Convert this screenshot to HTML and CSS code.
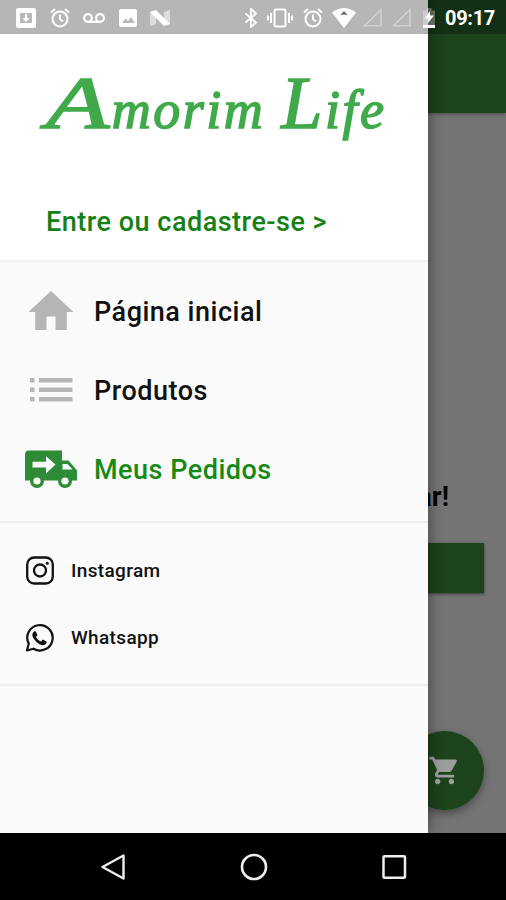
FILE: index.html
```html
<!DOCTYPE html>
<html lang="pt-BR">
<head>
    <meta charset="UTF-8">
    <meta name="viewport" content="width=device-width, initial-scale=1.0">
    <title>Amorim Life</title>
    <link rel="stylesheet" href="styles.css">
</head>
<body>
    <div class="screen">
        <!-- Page behind the drawer -->
        <div class="page">
            <header class="app-bar"></header>
            <main class="page-content">
                <p class="page-message">ar!</p>
                <div class="page-button"></div>
                <div class="cart-button">
                    <svg width="33" height="33" viewBox="0 0 24 24" fill="#9b9f9b">
                        <path d="M7 18c-1.1 0-1.99.9-1.99 2S5.900 22 7 22s2-.9 2-2-.9-2-2-2zM1 2v2h2l3.600 7.590-1.350 2.450c-.16.280-.25.610-.25.960 0 1.100.9 2 2 2h12v-2H7.420c-.14 0-.25-.11-.25-.25l.03-.12.900-1.630h7.450c.75 0 1.410-.41 1.750-1.030l3.580-6.490A1 1 0 0 0 20 4H5.210l-.94-2H1zm16 16c-1.100 0-1.990.9-1.990 2s.89 2 1.990 2 2-.9 2-2-.9-2-2-2z"/>
                    </svg>
                </div>
            </main>
        </div>

        <!-- Drawer -->
        <nav class="drawer">
            <div class="drawer-header">
                <h1 class="logo"><span class="logo-initial wide">A</span>morim <span class="logo-initial">L</span>ife</h1>
                <a class="login">Entre ou cadastre-se &gt;</a>
            </div>
            <ul class="menu">
                <li class="menu-item">
                    <svg width="54" height="54" viewBox="0 0 24 24" fill="#b5b5b5"><path d="M10 20v-6h4v6h5v-8h3L12 2.700 2 12h3v8z"/></svg>
                    <span>Página inicial</span>
                </li>
                <li class="menu-item">
                    <svg width="54" height="54" viewBox="0 0 54 54" fill="#b5b5b5">
                        <path d="M6 14h4.500v4.500H6zM6 23.500h4.500V28H6zM6 33h4.500v4.500H6zM15 14h33.500v4.500H15zM15 23.500h33.500V28H15zM15 33h33.500v4.500H15z"/>
                    </svg>
                    <span>Produtos</span>
                </li>
                <li class="menu-item active">
                    <svg width="54" height="54" viewBox="0 0 54 54">
                        <path fill="#2f8c36" d="M5 7.500h33v10h6.500L53 27.500v10H1v-26q0-4 4-4z"/>
                        <path fill="#fafafa" d="M8.500 18.800H22v-5.500l9.500 8.200-9.500 9v-6H8.500zM38.500 21h5l5 5.500h-10z"/>
                        <circle cx="13" cy="38" r="5.300" fill="#fafafa" stroke="#2f8c36" stroke-width="3.400"/>
                        <circle cx="41" cy="38" r="5.300" fill="#fafafa" stroke="#2f8c36" stroke-width="3.400"/>
                    </svg>
                    <span>Meus Pedidos</span>
                </li>
            </ul>
            <ul class="social">
                <li class="social-item">
                    <svg width="30" height="30" viewBox="0 0 30 30" fill="none" stroke="#111" stroke-width="2.300">
                        <rect x="2.200" y="1.500" width="25.600" height="26" rx="7"/>
                        <circle cx="15" cy="14.500" r="6"/>
                        <circle cx="22.300" cy="7.300" r="1.500" fill="#111" stroke="none"/>
                    </svg>
                    <span>Instagram</span>
                </li>
                <li class="social-item">
                    <svg width="30" height="30" viewBox="0 0 30 30">
                        <path fill="none" stroke="#111" stroke-width="2.200" stroke-linejoin="round" d="M1.900 27.500l1.900-6.700A12.700 12.700 0 1 1 8.500 25.700z"/>
                        <path fill="#111" d="M10.200 8.200c-.6-.1-1.200.1-1.600.6-3.200 3.600.5 8 3.300 10.600 2.900 2.500 7.300 4.200 9.300 1.200.5-.8.600-1.800.3-2.100l-3.300-1.700c-.5-.2-.8 0-1.100.4l-1.100 1.400c-1.800-.5-4.300-2.800-5-4.500l1.200-1.700c.2-.3.100-.6 0-.9l-1.400-3z"/>
                    </svg>
                    <span>Whatsapp</span>
                </li>
            </ul>
        </nav>

        <!-- Status bar -->
        <div class="status-bar">
            <div class="status-left">
                <svg width="20" height="20" viewBox="0 0 20 20"><rect width="20" height="20" rx="2" fill="#fff"/><path fill="#b9b9b9" d="M4 5h12v10H4z"/><path fill="#fff" d="M9 6h2v4h2.500L10 14l-3.500-4H9z"/></svg>
                <svg width="20" height="20" viewBox="0 0 20 20" fill="none" stroke="#fff" stroke-width="2"><circle cx="10" cy="11" r="7.500"/><path d="M10 6.500V11l3 2.500M1 4.500L5 1M19 4.500L15 1"/></svg>
                <svg width="22" height="20" viewBox="0 0 22 20" fill="none" stroke="#fff" stroke-width="2.200"><circle cx="5" cy="10" r="3.900"/><circle cx="17" cy="10" r="3.900"/><path d="M5 13.900h12"/></svg>
                <svg width="18" height="20" viewBox="0 0 18 20"><rect y="1" width="18" height="18" rx="2" fill="#fff"/><path fill="#b9b9b9" d="M3 15l3.500-4.500L9 13l3-4 4 6z"/></svg>
                <svg width="20" height="18" viewBox="0 0 20 18"><path fill="#dedede" d="M0 3l6-2v14l-6 2zM14 3l6-2v14l-6 2z"/><path fill="#fff" d="M0 3l6-2 14 14-6 2z"/></svg>
            </div>
            <div class="status-right">
                <svg width="14" height="20" viewBox="0 0 14 20" fill="none" stroke="#fff" stroke-width="1.800"><path d="M1.500 5.500l10.500 9L7 19V1l5 4.500-10.500 9"/></svg>
                <svg class="vibrate" width="26" height="20" viewBox="0 0 26 20" fill="none" stroke="#fff" stroke-width="2"><rect x="7.500" y="1.500" width="11" height="17" rx="1.500"/><path d="M4 5v10M1 7.500v5M22 5v10M25 7.500v5"/></svg>
                <svg class="alarm" width="20" height="20" viewBox="0 0 20 20" fill="none" stroke="#fff" stroke-width="2"><circle cx="10" cy="11" r="7.500"/><path d="M10 6.500V11l3 2.500M1 4.500L5 1M19 4.500L15 1"/></svg>
                <svg class="wifi" width="24" height="20" viewBox="0 0 24 20"><path fill="#fff" d="M0 4.500Q12-4.500 24 4.500L12 20z"/><path fill="#666" d="M12 3l4 4.500q-4-2-8 0z"/></svg>
                <svg class="signal" width="19" height="19" viewBox="0 0 19 19" fill="none" stroke="#d0d0d0" stroke-width="1.600"><path d="M1.500 17.800H18V1.500z"/></svg>
                <svg class="signal second" width="19" height="19" viewBox="0 0 19 19" fill="none" stroke="#d0d0d0" stroke-width="1.600"><path d="M1.500 17.800H18V1.500z"/></svg>
                <svg class="battery" width="14" height="20" viewBox="0 0 14 20"><path fill="#fff" fill-opacity=".3" d="M1 2.500h3.500V0h5v2.500H13V17H1z"/><path fill="#fff" d="M8 3L2.500 10.500H6V15l6-7.500H8zM1 17h12v3H1z"/></svg>
                <span class="clock">09:17</span>
            </div>
        </div>

        <!-- Android navigation -->
        <div class="nav-bar">
            <svg width="28" height="28" viewBox="0 0 28 28" fill="none" stroke="#eee" stroke-width="2.400" stroke-linejoin="round"><path d="M3.500 14L24.500 2.500v23z"/></svg>
            <svg width="28" height="28" viewBox="0 0 28 28" fill="none" stroke="#eee" stroke-width="2.600"><circle cx="14" cy="14" r="12"/></svg>
            <svg width="28" height="28" viewBox="0 0 28 28" fill="none" stroke="#eee" stroke-width="2.500"><rect x="3.500" y="3.200" width="21.500" height="21.500" rx="1"/></svg>
        </div>
    </div>
</body>
</html>
```
FILE: styles.css
```css
* {
    box-sizing: border-box;
}

body {
    margin: 0;
    font-family: Roboto, "Liberation Sans", sans-serif;
}

ul {
    list-style: none;
    margin: 0;
    padding: 0;
}

svg {
    display: block;
    flex-shrink: 0;
}

.screen {
    position: relative;
    display: flex;
    flex-direction: column;
    width: 506px;
    height: 900px;
    overflow: hidden;
}

.page {
    display: flex;
    flex-direction: column;
    flex: 1;
    background-color: #747474;
}

.app-bar {
    height: 113px;
    background-color: #1c431c;
    box-shadow: 0 1px 4px rgba(0, 0, 0, 0.35);
}

.page-content {
    display: flex;
    flex-direction: column;
    align-items: flex-end;
    padding: 367px 22px 0;
}

.page-message {
    margin: 0 35px 0 0;
    font-size: 27px;
    font-weight: 700;
    line-height: 34px;
    color: #050505;
}

.page-button {
    width: 462px;
    height: 50px;
    margin-top: 29px;
    background-color: #1c431c;
    box-shadow: 0 1px 3px rgba(0, 0, 0, 0.5);
}

.cart-button {
    display: flex;
    align-items: center;
    justify-content: center;
    width: 79px;
    height: 79px;
    margin-top: 138px;
    border-radius: 50%;
    background-color: #1c431c;
    box-shadow: 0 4px 8px rgba(0, 0, 0, 0.35);
}

.drawer {
    position: absolute;
    top: 0;
    left: 0;
    width: 428px;
    height: 833px;
    padding-top: 34px;
    background-color: #fafafa;
    box-shadow: 0 0 14px rgba(0, 0, 0, 0.45);
}

.drawer-header {
    display: flex;
    flex-direction: column;
    height: 228px;
    padding: 24px 46px 0;
    background-color: #fff;
    border-bottom: 2px solid #f2f2f2;
}

.logo {
    height: 90px;
    margin: 0;
    font-family: "Liberation Serif", serif;
    font-size: 54px;
    font-style: italic;
    font-weight: 400;
    line-height: 90px;
    letter-spacing: 2.5px;
    white-space: nowrap;
    color: #40aa4b;
    -webkit-text-stroke: 1.5px #40aa4b;
}

.logo-initial {
    font-size: 74px;
}

.logo-initial.wide {
    display: inline-block;
    margin-right: 18px;
    transform: scaleX(1.4);
    transform-origin: left;
}

.login {
    margin-top: 56px;
    font-size: 27px;
    font-weight: 500;
    line-height: 36px;
    letter-spacing: 0.5px;
    white-space: nowrap;
    color: #158015;
}

.menu {
    height: 261px;
    padding-top: 10px;
    border-bottom: 2px solid #eee;
}

.menu-item {
    display: flex;
    align-items: center;
    gap: 16px;
    height: 79px;
    padding-left: 24px;
    font-size: 27px;
    font-weight: 500;
    letter-spacing: 0.5px;
    color: #111;
}

.menu-item.active {
    color: #158a15;
}

.social {
    height: 163px;
    padding-top: 14px;
    border-bottom: 2px solid #eee;
}

.social-item {
    display: flex;
    align-items: center;
    gap: 16px;
    height: 67px;
    padding-left: 25px;
    font-size: 19px;
    font-weight: 500;
    letter-spacing: 0.35px;
    color: #111;
}

.status-bar {
    position: absolute;
    top: 0;
    left: 0;
    display: flex;
    justify-content: space-between;
    width: 100%;
    height: 34px;
    padding: 1px 11px 0 16px;
    background-color: rgba(0, 0, 0, 0.27);
}

.status-left {
    display: flex;
    align-items: center;
    gap: 13.500px;
}

.status-right {
    display: flex;
    align-items: center;
}

.vibrate {
    margin-left: 9px;
}

.alarm {
    margin-left: 10px;
}

.wifi {
    margin-left: 9px;
}

.signal {
    margin-left: 7px;
}

.signal.second {
    margin-left: 10px;
}

.battery {
    margin-left: 11px;
}

.clock {
    margin-left: 9px;
    font-size: 20px;
    font-weight: 700;
    letter-spacing: -0.3px;
    color: #fff;
}

.nav-bar {
    position: relative;
    display: flex;
    align-items: center;
    justify-content: space-between;
    height: 67px;
    padding: 0 98px 0 99px;
    background-color: #000;
}
```
